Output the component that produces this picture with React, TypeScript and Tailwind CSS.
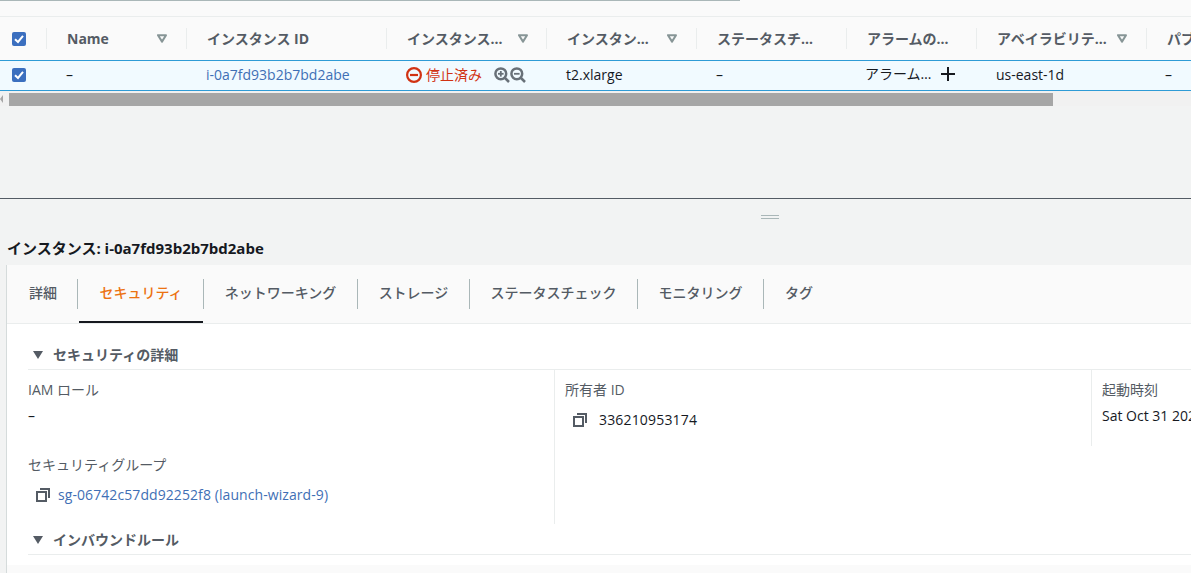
const ink = "text-[#16191f]"

function Check() {
  return (
    <svg width="14" height="14" viewBox="0 0 14 14" className="block">
      <rect width="14" height="14" rx="2" fill="#3b6fbf" />
      <path d="M3 7.2 6 10 11 3.8" fill="none" stroke="#fff" strokeWidth="2" />
    </svg>
  )
}

function Caret() {
  return (
    <svg width="10" height="9" viewBox="0 0 10 9" className="block shrink-0">
      <path d="M1 1.2h8L5 7.6z" fill="none" stroke="#879596" strokeWidth="2" strokeLinejoin="round" />
    </svg>
  )
}

function Arrow() {
  return (
    <svg width="10" height="8" viewBox="0 0 10 8" className="block shrink-0">
      <path d="M0 0h10L5 8z" fill="#545b64" />
    </svg>
  )
}

function Copy() {
  return (
    <svg width="14" height="14" viewBox="0 0 14 14" className="block shrink-0" fill="none" stroke="#545b64" strokeWidth="2">
      <rect x="1" y="4" width="9" height="9" />
      <path d="M4 1h9v9" />
    </svg>
  )
}

function Zoom({ plus }: { plus?: boolean }) {
  return (
    <svg width="16" height="16" viewBox="0 0 16 16" className="block shrink-0" fill="none" stroke="#687078" strokeWidth="2.5">
      <circle cx="6.8" cy="6.8" r="5.4" />
      <path d="M11 11l4 4" />
      <path d="M4 6.8h5.6" strokeWidth="1.8" />
      {plus && <path d="M6.8 4v5.6" strokeWidth="1.8" />}
    </svg>
  )
}

function Stopped() {
  return (
    <svg width="16" height="16" viewBox="0 0 16 16" className="block shrink-0" fill="none" stroke="#d13212" strokeWidth="2.2">
      <circle cx="8" cy="8" r="6.9" />
      <path d="M4 8h8" />
    </svg>
  )
}

function HeaderCell({ className, label, caret }: { className: string; label?: string; caret?: boolean }) {
  return (
    <div className={`flex h-[21px] items-center border-r border-[#eaeded] pl-5 pr-[18px] ${className}`}>
      <span className="flex-1 whitespace-nowrap font-bold text-[#545b64]">{label}</span>
      {caret && <Caret />}
    </div>
  )
}

function Tab({ label, className, active }: { label: string; className: string; active?: boolean }) {
  return (
    <div className={`relative flex h-full items-center justify-center pb-[2px] font-medium ${className} ${active ? "text-[#ec7211]" : "text-[#545b64]"}`}>
      {label}
      {active && <div className="absolute bottom-0 left-0 right-0 h-0.5 bg-[#16191f]" />}
    </div>
  )
}

function TabSep() {
  return <div className="h-[30px] w-px shrink-0 bg-[#aab7b8]" />
}

function SectionTitle({ label, className }: { label: string; className: string }) {
  return (
    <div className={`ml-[21px] flex h-[31px] items-center gap-[10px] border-b border-[#eaeded] pl-[5px] pt-[2px] font-bold text-[#545b64] ${className}`}>
      <Arrow />
      {label}
    </div>
  )
}

export default function App() {
  return (
    <div className="flex h-[573px] w-[1191px] flex-col overflow-hidden bg-[#f2f3f3] text-[14px] leading-[20px] [font-family:'Open_Sans','Noto_Sans_CJK_JP',sans-serif]">
      {/* top of the instances table */}
      <div className="h-[17px] shrink-0 border-b border-[#eaeded] bg-[#fafafa]">
        <div className="h-px w-[740px] bg-[#aab7b8]" />
      </div>
      <div className="flex h-[43px] shrink-0 items-center overflow-hidden bg-[#fafafa]">
        <div className="flex h-[21px] w-[47px] shrink-0 items-center border-r border-[#eaeded] pl-3">
          <Check />
        </div>
        <HeaderCell className="w-[140px] shrink-0 !pr-[19px]" label="Name" caret />
        <HeaderCell className="w-[200px] shrink-0" label="インスタンス ID" />
        <HeaderCell className="w-[160px] shrink-0" label="インスタンス…" caret />
        <HeaderCell className="w-[150px] shrink-0 !pr-[19px]" label="インスタン…" caret />
        <HeaderCell className="w-[150px] shrink-0" label="ステータスチ…" />
        <HeaderCell className="w-[130px] shrink-0" label="アラームの…" />
        <HeaderCell className="w-[170px] shrink-0 !pr-[19px]" label="アベイラビリテ…" caret />
        <HeaderCell className="w-[120px] shrink-0" label="パブリック" />
      </div>
      <div className={`flex h-[31px] shrink-0 items-center overflow-hidden border-y border-[#2e9bd6] bg-[#f1faff] pb-[2px] ${ink}`}>
        <div className="w-[47px] shrink-0 pl-3">
          <Check />
        </div>
        <div className="w-[140px] shrink-0 pl-[19px]">–</div>
        <div className="w-[200px] shrink-0 pl-[19px] text-[#3f6fb5]">i-0a7fd93b2b7bd2abe</div>
        <div className="flex w-[160px] shrink-0 items-center pl-[19px]">
          <Stopped />
          <span className="ml-1 whitespace-nowrap text-[#d13212]">停止済み</span>
          <div className="ml-[12px] flex">
            <Zoom plus />
            <Zoom />
          </div>
        </div>
        <div className="w-[150px] shrink-0 pl-[19px]">t2.xlarge</div>
        <div className="w-[150px] shrink-0 pl-[19px]">–</div>
        <div className="flex w-[130px] shrink-0 items-center pb-px pl-[18px]">
          <span className="whitespace-nowrap">アラーム…</span>
          <svg width="14" height="14" viewBox="0 0 14 14" className="ml-[10px] block shrink-0">
            <path d="M7 0v14M0 7h14" stroke="#16191f" strokeWidth="2" />
          </svg>
        </div>
        <div className="w-[170px] shrink-0 pl-[19px]">us-east-1d</div>
        <div className="w-[120px] shrink-0 pl-[18px]">–</div>
      </div>
      {/* horizontal scrollbar */}
      <div className="flex h-[15px] shrink-0 items-center bg-[#f1f1f1] pt-px">
        <svg width="9" height="8" viewBox="0 0 9 8" className="block shrink-0">
          <path d="M3 0v8L0 4z" fill="#a6a6a6" />
        </svg>
        <div className="h-[13px] w-[1044px] bg-[#a6a6a6]" />
      </div>
      <div className="h-[93px] shrink-0 border-b border-[#545b64]" />

      {/* splitter */}
      <div className="flex h-[38px] shrink-0 items-center justify-center pb-[2px] pl-[349px]">
        <div className="h-1 w-[18px] border-y border-[#aab7b8]" />
      </div>
      <h2 className={`h-[28px] shrink-0 whitespace-nowrap pl-[7px] pt-px text-[15px] font-bold ${ink}`}>
        インスタンス: i-0a7fd93b2b7bd2abe
      </h2>

      {/* detail panel */}
      <div className="ml-[6px] flex min-h-0 flex-1 flex-col border-l border-[#d5dbdb] bg-white">
        <div className="flex h-[59px] shrink-0 items-center border-b border-[#eaeded] bg-[#fafafa]">
          <Tab label="詳細" className="w-[70px] pl-[2px]" />
          <TabSep />
          <Tab label="セキュリティ" className="ml-px w-[124px]" active />
          <TabSep />
          <Tab label="ネットワーキング" className="w-[153px]" />
          <TabSep />
          <Tab label="ストレージ" className="w-[111px]" />
          <TabSep />
          <Tab label="ステータスチェック" className="w-[167px]" />
          <TabSep />
          <Tab label="モニタリング" className="w-[125px]" />
          <TabSep />
          <Tab label="タグ" className="w-[70px]" />
        </div>

        <SectionTitle label="セキュリティの詳細" className="mt-[15px]" />

        <div className="ml-[21px] flex h-[154px] shrink-0">
          <div className="w-[527px] shrink-0 border-r border-[#eaeded] pt-[10px]">
            <div className="text-[#545b64]">IAM ロール</div>
            <div className={`mt-[6px] ${ink}`}>–</div>
            <div className="mt-[29px] text-[#545b64]">セキュリティグループ</div>
            <div className="mt-[10px] flex items-center gap-2 pl-2 tracking-[0.08px] text-[#3f6fb5]">
              <Copy />
              sg-06742c57dd92252f8 (launch-wizard-9)
            </div>
          </div>
          <div className="h-[76px] w-[537px] shrink-0 border-r border-[#eaeded] pl-[10px] pt-[10px]">
            <div className="text-[#545b64]">所有者 ID</div>
            <div className={`mt-[10px] flex items-center gap-3 pl-2 tracking-[0.17px] ${ink}`}>
              <Copy />
              336210953174
            </div>
          </div>
          <div className="pl-[10px] pt-[10px]">
            <div className="text-[#545b64]">起動時刻</div>
            <div className={`mt-[6px] whitespace-nowrap ${ink}`}>Sat Oct 31 2020</div>
          </div>
        </div>

        <SectionTitle label="インバウンドルール" className="" />
        <div className="mt-[10px] flex-1 bg-[#fafafa]" />
      </div>
    </div>
  )
}
